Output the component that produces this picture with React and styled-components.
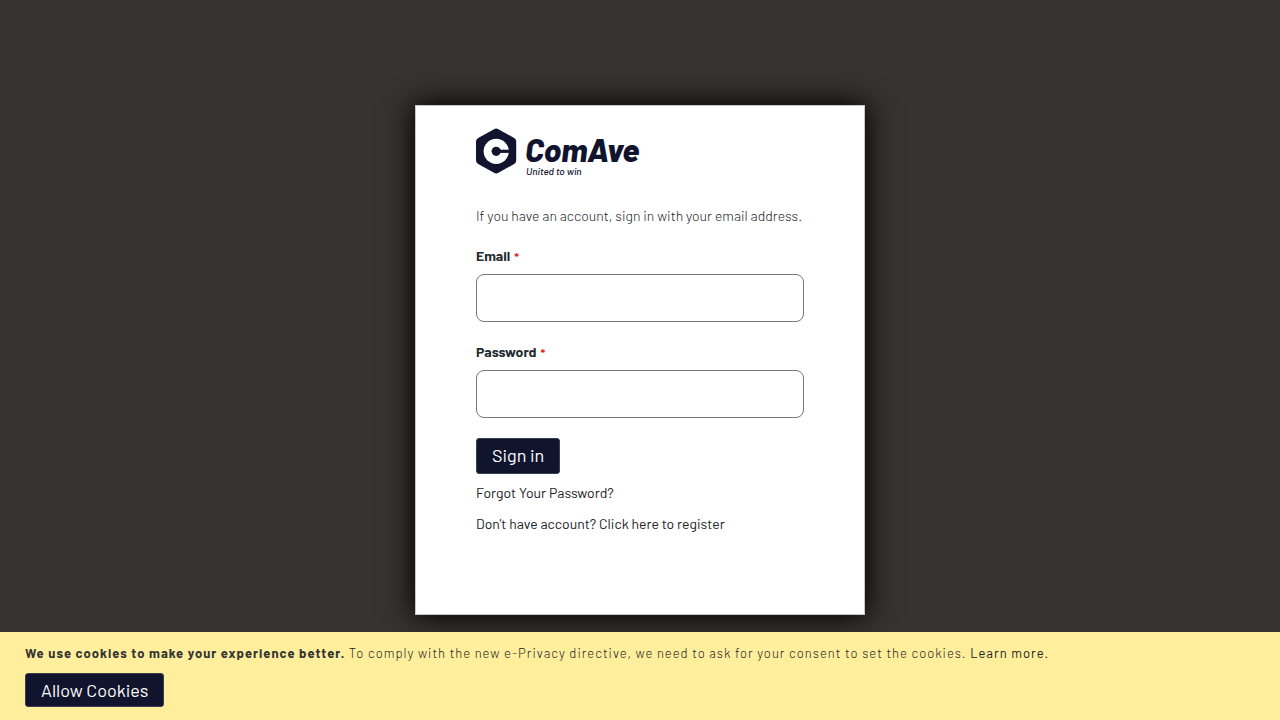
import React from "react";
import styled, { createGlobalStyle } from "styled-components";

const GlobalStyle = createGlobalStyle`
  *, *::before, *::after { box-sizing: border-box; }
  body {
    margin: 0;
    background: #373330;
    color: #333;
    font-family: Barlow, Roboto, "Liberation Sans", sans-serif;
    font-size: 14px;
    line-height: 20px;
  }
`;

const Page = styled.main`
  min-height: 100vh;
  display: flex;
  align-items: center;
  justify-content: center;
`;

const Card = styled.section`
  width: 100%;
  max-width: 450px;
  padding: 20px 60px 80px;
  background: #fff;
  border: 1px solid #c8c8c8;
  box-shadow: 0 0 28px 2px #000;
`;

const LogoLink = styled.a`
  display: block;
  width: 168px;
  height: 52px;
`;

const LogoImage = styled.svg`
  display: block;
  width: 100%;
  height: 100%;
  fill: #10142d;
`;

const Note = styled.p`
  margin: 28px 0 20px;
  color: #222;
  font-weight: 300;
`;

const Form = styled.form`
  display: flex;
  flex-direction: column;
  align-items: flex-start;
  gap: 20px;
`;

const Field = styled.div`
  width: 100%;
  display: flex;
  flex-direction: column;
  gap: 8px;
`;

const Label = styled.label`
  color: #222c30;
  font-weight: 700;
`;

const Required = styled.span`
  margin-left: 4px;
  color: #e02b27;
  font-size: 12px;
`;

const Input = styled.input`
  width: 100%;
  height: 48px;
  padding: 0 12px;
  border: 1px solid #777;
  border-radius: 8px;
  background: #fff;
  color: #333;
  font: inherit;
`;

const Button = styled.button`
  height: ${({ $compact }) => ($compact ? "34px" : "36px")};
  padding: ${({ $compact }) => ($compact ? "0 15px" : "0 15px 2px")};
  border: 1px solid #3a3e55;
  border-radius: 3px;
  background: #10142d;
  color: #fff;
  font-family: inherit;
  font-size: 18px;
  line-height: 24px;
  cursor: pointer;
`;

const Links = styled.nav`
  display: flex;
  flex-direction: column;
  align-items: flex-start;
  gap: 11px;
  margin-top: 9px;
`;

const TextLink = styled.a`
  color: #222;
  text-decoration: none;
`;

const CookieBar = styled.aside`
  position: fixed;
  right: 0;
  bottom: 0;
  left: 0;
  padding: 11px 25px 13px;
  background: #ffee9c;
`;

const CookieText = styled.p`
  margin: 0 0 10px;
  color: #222;
  font-size: 13px;
  font-weight: 300;
  letter-spacing: 1px;

  a { font-weight: 400; }
`;

const CookieTitle = styled.strong`
  color: #333;
  font-weight: 700;
`;

function Logo() {
  return (
    <LogoImage viewBox="0 0 168 52" role="img" aria-label="ComAve, United to win">
      <path d="M18 3.2Q20.2 2 22.4 3.2L38.2 12Q40.2 13.2 40.2 15.4V34.6Q40.2 36.8 38.2 38L22.4 46.8Q20.2 48 18 46.8L2.2 38Q0 36.8 0 34.6V15.4Q0 13.2 2.2 12Z" />
      <circle cx="20.2" cy="25.3" r="12.6" fill="#fff" />
      <circle cx="20.2" cy="25.3" r="4.6" />
      <path d="M20 23.7H34V26.9H20Z" />
      <text x="49" y="36" fontFamily="Barlow, Roboto, sans-serif" fontSize="32" fontWeight="800" fontStyle="italic">ComAve</text>
      <text x="50" y="49" fontFamily="Barlow, Roboto, sans-serif" fontSize="10" fontWeight="500" fontStyle="italic">United to win</text>
    </LogoImage>
  );
}

function FormField({ id, label, type, autoComplete }) {
  return (
    <Field>
      <Label htmlFor={id}>
        {label}
        <Required aria-hidden="true">*</Required>
      </Label>
      <Input id={id} name={id} type={type} autoComplete={autoComplete} required />
    </Field>
  );
}

export default function App() {
  return (
    <>
      <GlobalStyle />
      <Page>
        <Card>
          <LogoLink href="#home"><Logo /></LogoLink>
          <Note>If you have an account, sign in with your email address.</Note>
          <Form onSubmit={(event) => event.preventDefault()}>
            <FormField id="email" label="Email" type="email" autoComplete="email" />
            <FormField id="password" label="Password" type="password" autoComplete="current-password" />
            <Button type="submit">Sign in</Button>
          </Form>
          <Links>
            <TextLink href="#forgot">Forgot Your Password?</TextLink>
            <TextLink href="#register">Don't have account? Click here to register</TextLink>
          </Links>
        </Card>
      </Page>
      <CookieBar aria-label="Cookie notice">
        <CookieText>
          <CookieTitle>We use cookies to make your experience better.</CookieTitle>{" "}
          To comply with the new e-Privacy directive, we need to ask for your consent to set the cookies.{" "}
          <TextLink href="#privacy">Learn more.</TextLink>
        </CookieText>
        <Button type="button" $compact>Allow Cookies</Button>
      </CookieBar>
    </>
  );
}
